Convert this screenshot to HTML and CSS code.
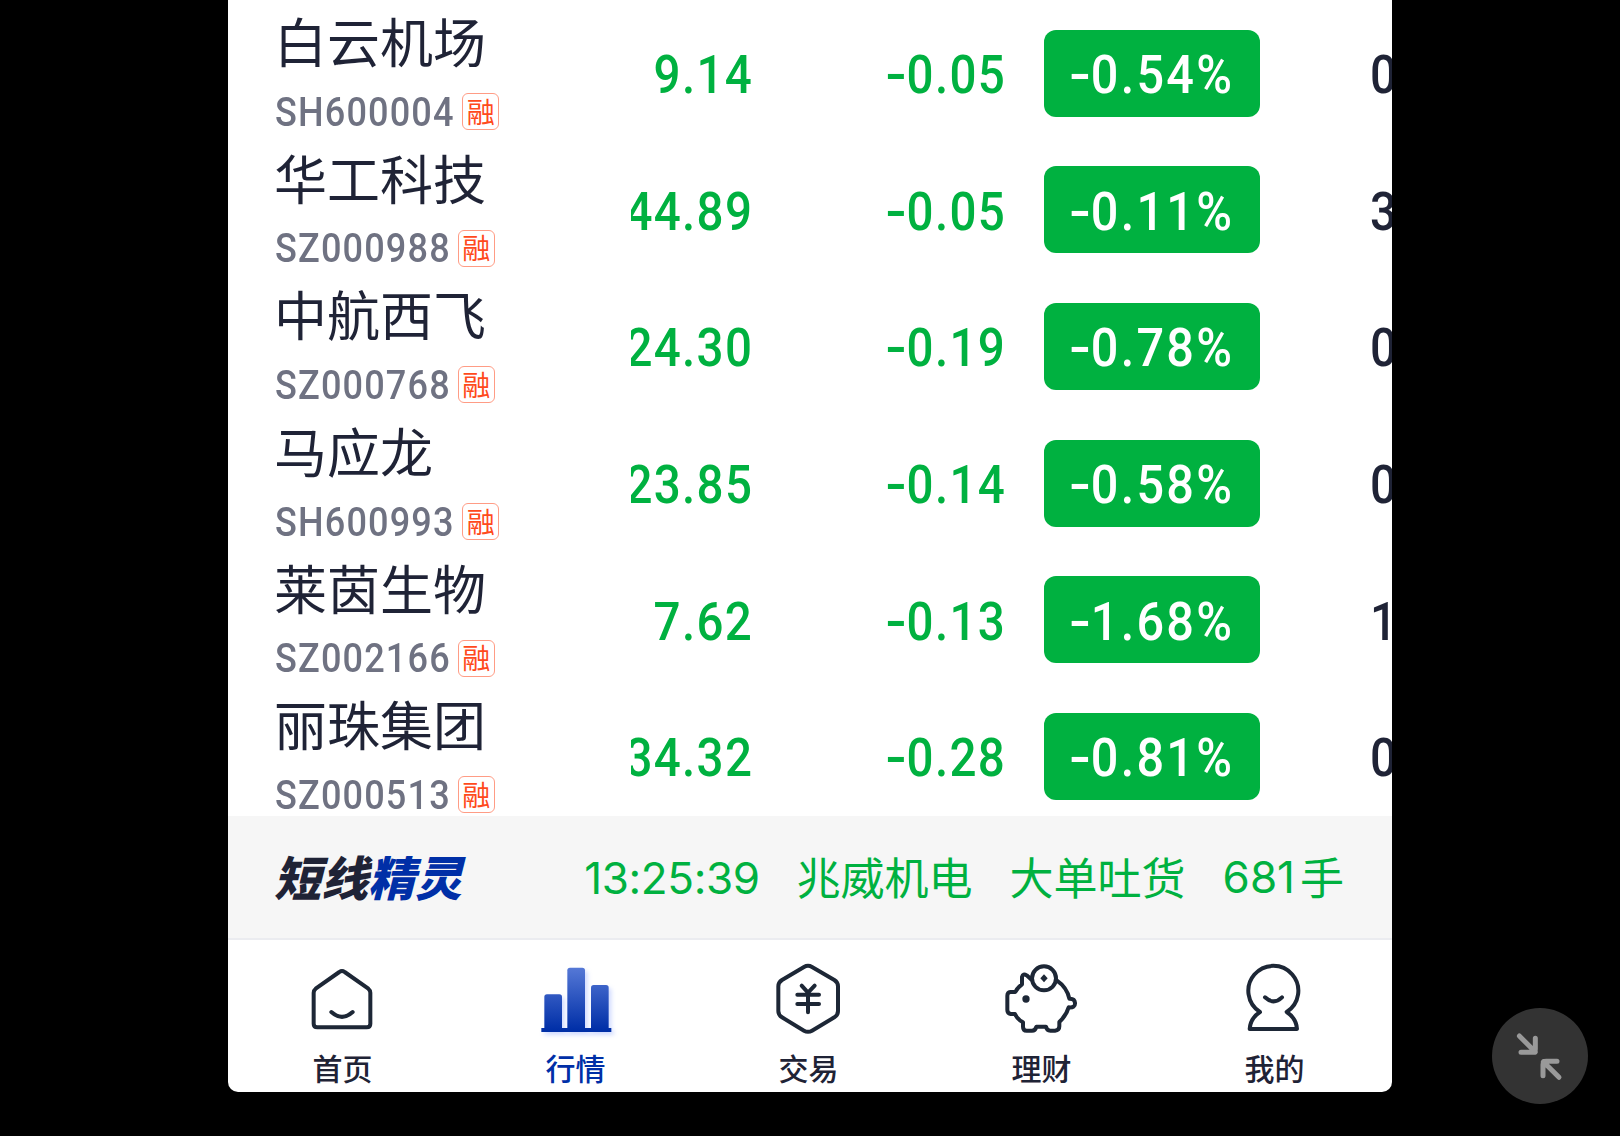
FILE: index.html
```html
<!DOCTYPE html>
<html lang="zh-CN">
<head>
    <meta charset="UTF-8">
    <meta name="viewport" content="width=device-width, initial-scale=1.0">
    <title>行情</title>
    <link rel="stylesheet" href="styles.css">
</head>
<body>
    <div class="app">
        <div class="stock-list">
            <div class="stock">
                <div class="info">
                    <div class="name">白云机场</div>
                    <div class="code"><span>SH600004</span><i class="tag">融</i></div>
                </div>
                <div class="price"><span class="num">9.14</span></div>
                <div class="change"><span class="num"><b>-</b>0.05</span></div>
                <div class="percent"><span class="num"><b>-</b>0.54%</span></div>
                <div class="turnover"><span class="num">0</span></div>
            </div>
            <div class="stock">
                <div class="info">
                    <div class="name">华工科技</div>
                    <div class="code"><span>SZ000988</span><i class="tag">融</i></div>
                </div>
                <div class="price"><span class="num">44.89</span></div>
                <div class="change"><span class="num"><b>-</b>0.05</span></div>
                <div class="percent"><span class="num"><b>-</b>0.11%</span></div>
                <div class="turnover"><span class="num">3</span></div>
            </div>
            <div class="stock">
                <div class="info">
                    <div class="name">中航西飞</div>
                    <div class="code"><span>SZ000768</span><i class="tag">融</i></div>
                </div>
                <div class="price"><span class="num">24.30</span></div>
                <div class="change"><span class="num"><b>-</b>0.19</span></div>
                <div class="percent"><span class="num"><b>-</b>0.78%</span></div>
                <div class="turnover"><span class="num">0</span></div>
            </div>
            <div class="stock">
                <div class="info">
                    <div class="name">马应龙</div>
                    <div class="code"><span>SH600993</span><i class="tag">融</i></div>
                </div>
                <div class="price"><span class="num">23.85</span></div>
                <div class="change"><span class="num"><b>-</b>0.14</span></div>
                <div class="percent"><span class="num"><b>-</b>0.58%</span></div>
                <div class="turnover"><span class="num">0</span></div>
            </div>
            <div class="stock">
                <div class="info">
                    <div class="name">莱茵生物</div>
                    <div class="code"><span>SZ002166</span><i class="tag">融</i></div>
                </div>
                <div class="price"><span class="num">7.62</span></div>
                <div class="change"><span class="num"><b>-</b>0.13</span></div>
                <div class="percent"><span class="num"><b>-</b>1.68%</span></div>
                <div class="turnover"><span class="num">1</span></div>
            </div>
            <div class="stock">
                <div class="info">
                    <div class="name">丽珠集团</div>
                    <div class="code"><span>SZ000513</span><i class="tag">融</i></div>
                </div>
                <div class="price"><span class="num">34.32</span></div>
                <div class="change"><span class="num"><b>-</b>0.28</span></div>
                <div class="percent"><span class="num"><b>-</b>0.81%</span></div>
                <div class="turnover"><span class="num">0</span></div>
            </div>
        </div>

        <div class="ticker">
            <div class="ticker-logo">短线<span>精灵</span></div>
            <div class="ticker-text">
                <span class="time">13:25:39</span>
                <span>兆威机电</span>
                <span>大单吐货</span>
                <span><span class="lots">681</span>手</span>
            </div>
        </div>

        <nav class="tabbar">
            <a class="tab">
                <svg viewBox="38 15 240 240">
                    <path d="M147 51Q155 45 163 51L234 101Q240 106 240 113V206Q240 217 229 217H81Q70 217 70 206V113Q70 106 76 101Z"/>
                    <path d="M123 171Q155 200 187 171"/>
                </svg>
                <span>首页</span>
            </a>
            <a class="tab active">
                <svg viewBox="48 15 240 240">
                    <defs>
                        <linearGradient id="bars" gradientUnits="userSpaceOnUse" x1="0" y1="38" x2="0" y2="225">
                            <stop offset="0" stop-color="#5578d6"/>
                            <stop offset="1" stop-color="#002fa7"/>
                        </linearGradient>
                    </defs>
                    <g class="bars">
                        <path d="M73 220V126Q73 118 81 118H118Q126 118 126 126V220Z"/>
                        <path d="M142 220V46Q142 38 150 38H187Q195 38 195 46V220Z"/>
                        <path d="M213 220V98Q213 90 221 90H258Q266 90 266 98V220Z"/>
                        <path d="M64 219H274V231H64Z"/>
                    </g>
                </svg>
                <span>行情</span>
            </a>
            <a class="tab">
                <svg viewBox="58 15 240 240">
                    <path d="M163 36Q175 29 187 36L254 75Q265 82 265 94V168Q265 180 254 187L187 227Q175 234 163 227L97 187Q86 180 86 168V94Q86 82 97 75Z"/>
                    <path d="M156 92L175 113L195 92M143 119H208M143 147H208M175 115V172"/>
                </svg>
                <span>交易</span>
            </a>
            <a class="tab">
                <svg viewBox="67 15 240 240">
                    <path d="M154 73L141 61Q130 54 127 66V88Q113 98 107 111H92Q83 112 83 122V165Q83 175 93 177H106Q114 194 130 202V215Q130 227 141 227H157Q167 227 170 215H199Q201 227 212 227H226Q239 226 239 214V201Q261 180 267 157Q287 159 286 144Q285 130 269 131Q262 97 231 76"/>
                    <circle cx="193" cy="70" r="36"/>
                    <path class="solid" d="M193 58L204 70L193 82L182 70Z"/>
                    <circle class="solid" cx="139" cy="132" r="11"/>
                </svg>
                <span>理财</span>
            </a>
            <a class="tab">
                <svg viewBox="60 15 240 240">
                    <path d="M135 171A75 75 0 1 1 215 171Q244 190 246 222H104Q106 190 135 171Z"/>
                    <path d="M150 127Q176 151 201 127"/>
                </svg>
                <span>我的</span>
            </a>
        </nav>
    </div>

    <button class="shrink" aria-label="缩小">
        <svg viewBox="36 24 288 288">
            <path d="M118 108L166 156M166 115V148Q166 157 157 157H123M237 232L190 185M231 184H199Q189 184 189 194V227"/>
        </svg>
    </button>
</body>
</html>
```
FILE: styles.css
```css
* {
    box-sizing: border-box;
}

body {
    margin: 0;
    height: 1136px;
    background: #000;
    color: #1f2336;
    font-family: "Noto Sans CJK SC", sans-serif;
    overflow: hidden;
}

.app {
    display: flex;
    flex-direction: column;
    width: 1164px;
    height: 1092px;
    margin-left: 228px;
    background: #fff;
    border-radius: 0 0 10px 10px;
    overflow: hidden;
}

/* 股票列表 */
.stock-list {
    height: 816px;
    padding-top: 5px;
    overflow: hidden;
}

.stock {
    display: grid;
    grid-template-columns: 356px 122px 253px 215px 1fr;
    align-items: center;
    height: 136.6px;
    padding-left: 47px;
}

.info {
    height: 136px;
}

.name {
    height: 76px;
    margin-left: -1px;
    font-size: 53px;
    line-height: 71px;
}

.code {
    display: flex;
    align-items: center;
    height: 61px;
    color: #6f7282;
    font-family: Roboto, sans-serif;
    font-size: 41px;
    font-weight: 500;
}

.code span {
    margin-right: -17px;
    letter-spacing: 1.3px;
    transform: scaleX(0.88);
    transform-origin: left;
}

.tag {
    display: flex;
    align-items: center;
    justify-content: center;
    width: 37px;
    height: 37px;
    padding-bottom: 2px;
    border: 1.5px solid #ff9c85;
    border-radius: 6px;
    color: #ff4a1c;
    font-family: "Noto Sans CJK SC", sans-serif;
    font-size: 28px;
    font-style: normal;
    font-weight: 400;
    line-height: 32px;
}

/* 窄体数字 */
.num {
    display: inline-block;
    padding-top: 3px;
    font-family: Roboto, sans-serif;
    font-size: 54px;
    font-weight: 500;
    letter-spacing: 1.5px;
    transform: scaleX(0.88);
    transform-origin: right;
}

.num b {
    display: inline-block;
    width: 24px;
    font-weight: 500;
    transform: scaleX(1.3);
    transform-origin: left;
}

.price,
.change {
    display: flex;
    justify-content: flex-end;
    color: #00b140;
    overflow: hidden;
}

.percent {
    display: flex;
    align-items: center;
    justify-content: center;
    width: 216px;
    height: 87px;
    margin-left: 38px;
    background: #00b140;
    border-radius: 12px;
    color: #fff;
}

.percent .num {
    letter-spacing: 2.5px;
    transform: scaleX(0.9);
    transform-origin: center;
}

.turnover {
    padding-left: 149px;
}

.turnover .num {
    transform-origin: left;
}

/* 短线精灵 */
.ticker {
    display: flex;
    align-items: center;
    justify-content: space-between;
    height: 124px;
    padding: 0 48px 2px 46px;
    background: #f6f6f6;
    border-bottom: 2px solid #ebecf0;
}

.ticker-logo {
    padding-bottom: 1px;
    font-size: 47px;
    font-style: italic;
    font-weight: 900;
}

.ticker-logo span {
    color: #002fa7;
}

.ticker-text {
    display: flex;
    align-items: center;
    gap: 37px;
    color: #00b140;
    font-size: 44px;
}

.time,
.lots {
    font-family: Inter, sans-serif;
}

.time {
    padding-top: 3px;
    letter-spacing: -0.4px;
}

.lots {
    display: inline-block;
    margin-right: 5px;
    transform: translateY(-2px);
}

/* 底部导航 */
.tabbar {
    display: flex;
    width: 1165px;
    height: 152px;
    margin-left: -2px;
    padding-top: 20px;
}

.tab {
    display: flex;
    flex-direction: column;
    align-items: center;
    width: 233px;
    font-size: 30px;
    font-weight: 500;
    line-height: 55px;
}

.tab svg {
    width: 80px;
    height: 80px;
    fill: none;
    stroke: #1d2736;
    stroke-width: 12;
    stroke-linecap: round;
    stroke-linejoin: round;
    overflow: visible;
}

.tab .solid {
    fill: #1d2736;
    stroke: none;
}

.tab .bars {
    fill: url(#bars);
    stroke: none;
    filter: drop-shadow(8px 9px 7px rgba(70, 110, 255, 0.25));
}

.active {
    color: #002fa7;
}

.shrink {
    position: fixed;
    right: 32px;
    bottom: 32px;
    width: 96px;
    height: 96px;
    padding: 0;
    background: #333;
    border: none;
    border-radius: 50%;
}

.shrink svg {
    display: block;
    fill: none;
    stroke: #999;
    stroke-width: 15;
    stroke-linecap: round;
    stroke-linejoin: round;
}
```
